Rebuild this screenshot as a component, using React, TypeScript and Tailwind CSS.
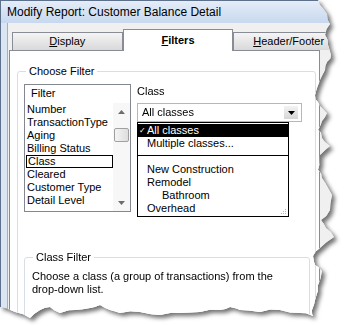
const filters = [
  "Number",
  "TransactionType",
  "Aging",
  "Billing Status",
  "Class",
  "Cleared",
  "Customer Type",
  "Detail Level",
];

// torn paper edge along the right and bottom of the screenshot
function tornEdge(): string {
  const right = [
    [318, 0], [320, 5], [327, 14], [330, 24], [325, 35], [328, 45], [331, 55], [327, 62],
    [325, 70], [320, 80], [315, 95], [318, 102], [324, 110], [327, 113], [322, 121],
    [318, 130], [322, 138], [330, 146], [320, 155], [318, 170], [322, 178], [327, 186],
    [332, 195], [330, 210], [321, 220], [326, 228], [334, 237], [320, 248], [313, 256],
    [315, 265], [322, 271], [318, 285], [315, 300], [312, 310], [313, 316],
  ];
  const bottom = [
    [300, 313], [280, 310], [260, 312], [240, 310], [230, 307], [220, 310], [200, 312],
    [180, 313], [160, 315], [140, 312], [120, 313], [110, 310], [100, 305], [90, 308],
    [75, 310], [60, 313], [50, 307], [40, 310], [30, 318], [15, 312], [0, 307],
  ];
  const pts = [...right, ...bottom];
  let seed = 11;
  const rnd = () => {
    seed = (seed * 9301 + 49297) % 233280;
    return seed / 233280;
  };
  const out: string[] = ["0px 0px"];
  for (let i = 0; i < pts.length; i++) {
    const [x, y] = pts[i];
    out.push(`${x}px ${y}px`);
    const n = pts[i + 1];
    if (n) {
      const mx = (x + n[0]) / 2 + (rnd() - 0.5) * 3;
      const my = (y + n[1]) / 2 + (rnd() - 0.5) * 3;
      out.push(`${mx.toFixed(1)}px ${my.toFixed(1)}px`);
    }
  }
  return `polygon(${out.join(",")})`;
}

function Arrow({ up }: { up?: boolean }) {
  return (
    <svg width="7" height="4" viewBox="0 0 7 4">
      <path d={up ? "M0 4 L3.5 0 L7 4 Z" : "M0 0 L7 0 L3.5 4 Z"} fill="#6d6d6d" />
    </svg>
  );
}

function FilterList() {
  return (
    <div className="w-[107px] h-[128px] border border-[#828790] bg-white flex flex-col">
      <div className="h-[18px] pl-[6px] leading-[16px]">Filter</div>
      <div className="flex flex-1">
        <div className="flex-1 flex flex-col">
          {filters.map((f) =>
            f === "Class" ? (
              <div key={f} className="h-[13px] leading-[11px] ml-[1px] pl-[1px] border border-black">
                {f}
              </div>
            ) : (
              <div key={f} className="h-[13px] leading-[13px] pl-[2px]">
                {f}
              </div>
            )
          )}
        </div>
        {/* scrollbar */}
        <div className="w-[17px] bg-[#f7f7f7] flex flex-col items-center">
          <div className="h-[17px] flex items-center justify-center">
            <Arrow up />
          </div>
          <div className="mt-[8px] w-[15px] h-[14px] rounded-[2px] border border-[#a0a0a0] bg-gradient-to-r from-[#f4f4f4] to-[#dedede]" />
          <div className="flex-1" />
          <div className="h-[17px] flex items-center justify-center">
            <Arrow />
          </div>
        </div>
      </div>
    </div>
  );
}

function ClassPicker() {
  return (
    <div className="ml-[6px] flex flex-col w-[165px]">
      <div className="h-[14px] leading-[14px]">Class</div>
      <div className="mt-[5px] h-[19px] border border-[#b5b7bd] bg-white flex items-center justify-between pl-[4px]">
        <span>All classes</span>
        <div className="mr-[3px] w-[14px] h-[13px] bg-gradient-to-b from-[#f3f3f3] to-[#d6d6d6] flex items-center justify-center">
          <svg width="7" height="4" viewBox="0 0 7 4">
            <path d="M0 0 L7 0 L3.5 4 Z" fill="#000" />
          </svg>
        </div>
      </div>
      {/* open dropdown */}
      <div className="relative w-[152px] h-[95px] border border-black bg-white pt-[1px]">
        <div className="h-[13px] leading-[13px] bg-black text-white flex pl-[1px]">
          <span className="w-[8px] text-[8px]">✓</span>
          <span>All classes</span>
        </div>
        <div className="h-[13px] leading-[13px] pl-[9px]">Multiple classes...</div>
        <div className="mt-[5px] h-px bg-black" />
        <div className="mt-[7px] h-[13px] leading-[13px] pl-[9px]">New Construction</div>
        <div className="h-[13px] leading-[13px] pl-[9px]">Remodel</div>
        <div className="h-[13px] leading-[13px] pl-[24px]">Bathroom</div>
        <div className="h-[13px] leading-[13px] pl-[9px]">Overhead</div>
        <svg className="absolute right-[1px] bottom-[1px]" width="7" height="7" viewBox="0 0 7 7">
          <g fill="#b8b8b8">
            <rect x="5" y="1" width="1" height="1" />
            <rect x="3" y="3" width="1" height="1" />
            <rect x="5" y="3" width="1" height="1" />
            <rect x="1" y="5" width="1" height="1" />
            <rect x="3" y="5" width="1" height="1" />
            <rect x="5" y="5" width="1" height="1" />
          </g>
        </svg>
      </div>
    </div>
  );
}

export default function App() {
  return (
    <div className="w-[344px] h-[326px] bg-white overflow-hidden font-['Liberation_Sans',Arial,sans-serif] text-[11px] text-black">
      <div className="[filter:drop-shadow(3px_3px_2px_rgba(0,0,0,0.55))]">
        <div
          className="w-[344px] h-[326px] flex flex-col bg-[#dce6f2] border-l border-t border-[#5d708c]"
          style={{ clipPath: tornEdge() }}
        >
          {/* title bar */}
          <div className="h-[22px] leading-[22px] pl-[6px] text-[12px] bg-gradient-to-b from-[#e4edf8] to-[#c8d8ee]">
            Modify Report: Customer Balance Detail
          </div>

          <div className="flex-1 ml-[6px] border-l border-[#a3b0c2] bg-[#f0f0f0] flex flex-col">
            {/* tabs */}
            <div className="mt-[6px] h-[21px] pl-[4px] flex items-end">
              <div className="w-[111px] h-[18px] border border-b-0 border-[#898c95] bg-gradient-to-b from-[#f5f5f5] to-[#d9d9d9] flex items-center justify-center">
                <span><u>D</u>isplay</span>
              </div>
              <div className="relative z-10 -mb-px w-[111px] h-[22px] border border-b-0 border-[#898c95] bg-white flex items-center justify-center font-bold">
                <span><u>F</u>ilters</span>
              </div>
              <div className="w-[111px] h-[18px] border border-b-0 border-[#898c95] bg-gradient-to-b from-[#f5f5f5] to-[#d9d9d9] flex items-center justify-center">
                <span><u>H</u>eader/Footer</span>
              </div>
            </div>

            {/* tab panel */}
            <div className="ml-px w-[311px] flex-1 border border-[#898c95] bg-white pl-[7px] pt-[13px]">
              <fieldset className="w-[299px] h-[260px] border border-[#d5dfe5] rounded-[3px] pl-[6px]">
                <legend className="ml-[2px] px-[3px] leading-[14px]">Choose Filter</legend>
                <div className="mt-[6px] flex items-start">
                  <FilterList />
                  <ClassPicker />
                </div>
                <fieldset className="mt-[33px] w-[286px] h-[80px] border border-[#d5dfe5] rounded-[3px] pl-[7px]">
                  <legend className="ml-[1px] px-[3px] leading-[14px]">Class Filter</legend>
                  <p className="pt-[6px] leading-[13px]">
                    Choose a class (a group of transactions) from the
                    <br />
                    drop-down list.
                  </p>
                </fieldset>
              </fieldset>
            </div>
          </div>
        </div>
      </div>
    </div>
  );
}
